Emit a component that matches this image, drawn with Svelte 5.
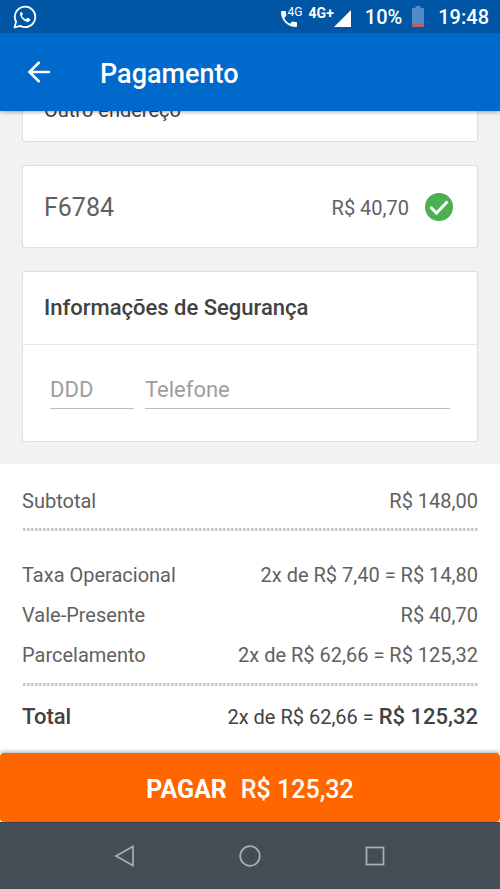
<script>
  let ddd = $state('');
  let phone = $state('');
  const fees = [
    { label: 'Taxa Operacional', value: '2x de R$ 7,40 = R$ 14,80' },
    { label: 'Vale-Presente', value: 'R$ 40,70' },
    { label: 'Parcelamento', value: '2x de R$ 62,66 = R$ 125,32' }
  ];
</script>

<div class="screen">
  <div class="status">
    <svg class="whatsapp" width="24" height="24" viewBox="0 0 24 24" aria-hidden="true">
      <path d="M1.500 22.500l1.600-5.700A10.200 10.200 0 1 1 7.200 20.900z" fill="none" stroke="#fff" stroke-width="1.800" stroke-linejoin="round" />
      <path d="M8.600 6.700c-.4 0-1.800 1-1.600 2.800.2 2 2.800 6 6.800 7.300 1.700.5 3.300-.6 3.500-2.200 0-.4-.1-.5-.4-.7l-2-1c-.4-.2-.6-.1-.8.200l-.9 1.100c-.2.200-.4.200-.7.100-1.600-.7-2.800-1.800-3.600-3.200-.1-.3 0-.5.200-.7l.7-.9c.1-.2.1-.4 0-.6l-.9-1.900c-.1-.3-.2-.3-.3-.3z" fill="#fff" />
    </svg>
    <div class="call">
      <svg width="16" height="16" viewBox="3 3 18 18" aria-hidden="true">
        <path d="M6.620 10.790c1.440 2.830 3.760 5.140 6.590 6.590l2.200-2.200c.27-.27.67-.36 1.020-.24 1.120.37 2.330.57 3.570.57.550 0 1 .45 1 1V20c0 .55-.45 1-1 1C10.610 21 3 13.390 3 4c0-.55.450-1 1-1h3.500c.55 0 1 .45 1 1 0 1.250.2 2.450.57 3.570.11.35.03.740-.25 1.020z" fill="#fff" />
      </svg>
      <span>4G</span>
    </div>
    <div class="signal">
      <span>4G+</span>
      <svg width="17" height="17" viewBox="0 0 17 17" aria-hidden="true"><path d="M17 0v17H0z" fill="#fff" /></svg>
    </div>
    <span class="percent">10%</span>
    <svg class="battery" width="12" height="21" viewBox="0 0 12 21" aria-hidden="true">
      <path d="M3.500 0h5v2H11q1 0 1 1v15H0V3q0-1 1-1h2.500z" fill="#528bc8" />
      <path d="M0 18h12v2q0 1-1 1H1q-1 0-1-1z" fill="#b9625f" />
    </svg>
    <time>19:48</time>
  </div>

  <header>
    <button class="back" aria-label="Voltar">
      <svg width="24" height="24" viewBox="0 0 24 24" aria-hidden="true">
        <path d="M23 12H3M12.500 2L2.500 12l10 10" fill="none" stroke="#fff" stroke-width="2.600" />
      </svg>
    </button>
    <h1>Pagamento</h1>
  </header>

  <main>
    <div class="cards">
      <section class="card address">Outro endereço</section>

      <section class="card voucher">
        <span class="code">F6784</span>
        <span class="amount">R$ 40,70</span>
        <svg width="28" height="28" viewBox="0 0 28 28" role="img" aria-label="Aplicado">
          <circle cx="14" cy="14" r="14" fill="#4caf50" />
          <path d="M5.500 14l6 6L22.500 8.500" fill="none" stroke="#fff" stroke-width="3" />
        </svg>
      </section>

      <section class="card">
        <h2>Informações de Segurança</h2>
        <div class="fields">
          <input class="ddd" type="tel" placeholder="DDD" aria-label="DDD" bind:value={ddd} />
          <input class="phone" type="tel" placeholder="Telefone" aria-label="Telefone" bind:value={phone} />
        </div>
      </section>
    </div>

    <section class="summary">
      <div class="row subtotal"><span>Subtotal</span><span>R$ 148,00</span></div>
      <div class="dots"></div>
      <div class="fees">
        {#each fees as fee}
          <div class="row"><span>{fee.label}</span><span>{fee.value}</span></div>
        {/each}
      </div>
      <div class="dots"></div>
      <div class="row total">
        <strong>Total</strong>
        <span>2x de R$ 62,66 = <strong>R$ 125,32</strong></span>
      </div>
    </section>
  </main>

  <div class="paybar">
    <button class="pay"><b>PAGAR</b><span>R$ 125,32</span></button>
  </div>

  <nav>
    <button aria-label="Voltar">
      <svg width="22" height="22" viewBox="0 0 22 22"><path d="M19 1.500v19L2 11z" /></svg>
    </button>
    <button aria-label="Início">
      <svg width="22" height="22" viewBox="0 0 22 22"><circle cx="11" cy="11" r="9.800" /></svg>
    </button>
    <button aria-label="Recentes">
      <svg width="22" height="22" viewBox="0 0 22 22"><rect x="2.500" y="2.500" width="17" height="17" /></svg>
    </button>
  </nav>
</div>

<style>
  :global(body) {
    margin: 0;
    background: #f2f2f2;
  }
  .screen {
    display: flex;
    flex-direction: column;
    min-height: 100vh;
    font-family: Roboto, "Liberation Sans", sans-serif;
    font-size: 20px;
    line-height: 24px;
    color: #616161;
  }
  .screen * {
    box-sizing: border-box;
  }
  button {
    border: 0;
    padding: 0;
    background: none;
    font-family: inherit;
    cursor: pointer;
  }
  svg {
    display: block;
    flex: none;
  }
  .status {
    display: flex;
    align-items: center;
    height: 33px;
    padding: 0 11px 0 13px;
    background: #0056a4;
    color: #fff;
    font-weight: 500;
    position: relative;
    z-index: 2;
  }
  .whatsapp {
    margin-right: auto;
  }
  .call,
  .signal {
    display: flex;
    align-items: flex-end;
    height: 20px;
  }
  .call {
    position: relative;
    width: 28px;
  }
  .call span {
    position: absolute;
    top: -3px;
    left: 7px;
    font-size: 12px;
    line-height: 16px;
    font-weight: 400;
  }
  .signal span {
    align-self: flex-start;
    font-size: 14px;
    line-height: 16px;
    margin-top: -2px;
    font-weight: 700;
  }
  .percent {
    margin-left: 14px;
  }
  .battery {
    margin: 0 14px 0 10px;
  }
  header {
    display: flex;
    align-items: center;
    height: 78px;
    padding: 0 27px;
    background: #0069cc;
    color: #fff;
    box-shadow: 0 1px 4px rgba(0, 0, 0, 0.35);
    position: relative;
    z-index: 1;
  }
  h1 {
    margin: 0;
    padding: 4px 0 0 49px;
    font-size: 27px;
    line-height: 32px;
    font-weight: 500;
  }
  main {
    flex: 1;
    display: flex;
    flex-direction: column;
    background: #fff;
  }
  .cards {
    display: flex;
    flex-direction: column;
    gap: 23px;
    padding: 0 22px 22px;
    background: #f2f2f2;
  }
  .card {
    background: #fff;
    border: 1px solid #dfdfdf;
    border-radius: 3px;
    box-shadow: 0 0 1px rgba(0, 0, 0, 0.1);
  }
  .address {
    margin-top: -35px;
    padding: 21px 21px 19px;
    color: #424242;
  }
  .voucher {
    display: flex;
    align-items: center;
    height: 83px;
    padding: 0 24px 0 21px;
  }
  .code {
    flex: 1;
    padding-top: 2px;
    font-size: 25px;
    line-height: 32px;
  }
  .amount {
    padding-top: 2px;
    margin-right: 16px;
  }
  h2 {
    margin: 0;
    padding: 24px 21px;
    border-bottom: 1px solid #e6e6e6;
    font-size: 22px;
    line-height: 24px;
    font-weight: 500;
    color: #424242;
  }
  .fields {
    display: flex;
    gap: 11px;
    padding: 24px 27px 32px;
  }
  input {
    min-width: 0;
    height: 40px;
    border: 0;
    border-bottom: 1px solid #bdbdbd;
    border-radius: 0;
    padding: 2px 0 0;
    background: none;
    font-family: inherit;
    font-size: 22px;
    color: #424242;
    outline: none;
  }
  input::placeholder {
    color: #9e9e9e;
    opacity: 1;
  }
  .ddd {
    width: 84px;
  }
  .phone {
    flex: 1;
  }
  .summary {
    padding: 25px 22px 0;
  }
  .row {
    display: flex;
    justify-content: space-between;
    align-items: baseline;
    line-height: 24px;
  }
  .subtotal {
    margin-bottom: 15px;
  }
  .dots {
    height: 3px;
    background: repeating-linear-gradient(90deg, #fff 0 1px, #c4c4c4 1px 3px, #dedede 3px 4px);
  }
  .fees {
    display: flex;
    flex-direction: column;
    gap: 16px;
    padding: 32px 0 16px;
  }
  .total {
    padding: 19px 0;
    color: #424242;
  }
  .total strong {
    font-size: 22px;
    font-weight: 500;
  }
  .paybar {
    background: #fff;
    box-shadow: 0 -1px 4px rgba(0, 0, 0, 0.35);
  }
  .pay {
    display: flex;
    justify-content: center;
    align-items: center;
    gap: 14px;
    width: 100%;
    height: 69px;
    padding-top: 3px;
    border-radius: 4px;
    background: #ff6600;
    color: #fff;
    font-size: 25px;
    font-weight: 500;
  }
  .pay b {
    font-weight: 700;
  }
  nav {
    display: flex;
    justify-content: center;
    align-items: center;
    gap: 103px;
    height: 67px;
    background: #454d54;
    border-top: 1px solid #39424a;
  }
  nav svg {
    fill: none;
    stroke: #a9afb9;
    stroke-width: 1.700;
  }
</style>
